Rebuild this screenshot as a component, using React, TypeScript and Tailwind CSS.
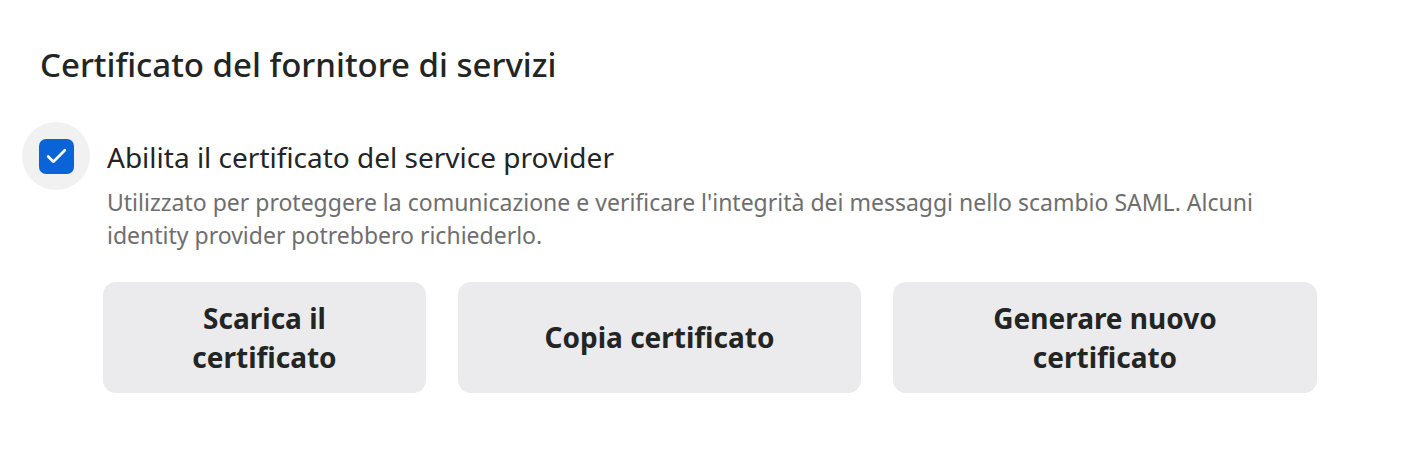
import { Check } from "lucide-react";

const actions = [
  { label: "Scarica il certificato", width: "w-[323px]" },
  { label: "Copia certificato", width: "w-[403px]" },
  { label: "Generare nuovo certificato", width: "w-[424px]" },
];

export default function App() {
  return (
    <div className="min-h-[468px] w-[1404px] bg-white pl-[40px] pt-[45px] text-[#222524] [font-family:'Noto_Sans',sans-serif]">
      <h2 className="text-[33px] font-medium leading-[40px]">Certificato del fornitore di servizi</h2>

      <div className="mt-[37px] ml-[-18px] flex items-start">
        <span className="flex size-[68px] shrink-0 items-center justify-center rounded-full bg-[#f1f1f1]">
          <span className="flex size-[35px] items-center justify-center rounded-[7px] bg-[#0a64d8] text-white">
            <Check className="size-[25px]" strokeWidth={2.5} />
          </span>
        </span>
        <span className="ml-[17px] mt-[19px] text-[28px] leading-[32px]">Abilita il certificato del service provider</span>
      </div>

      <p className="mt-[-4px] ml-[67px] w-[1215px] text-[23px] leading-[33px] text-[#6e6e6e]">
        Utilizzato per proteggere la comunicazione e verificare l'integrità dei messaggi nello scambio SAML. Alcuni
        identity provider potrebbero richiederlo.
      </p>

      <div className="mt-[30px] ml-[63px] flex gap-[32px]">
        {actions.map((a) => (
          <button
            key={a.label}
            className={`${a.width} flex h-[111px] items-center justify-center rounded-[13px] bg-[#ebebed] px-[40px] text-center text-[28px] font-bold leading-[39px] text-[#222524]`}
          >
            {a.label}
          </button>
        ))}
      </div>
    </div>
  );
}
